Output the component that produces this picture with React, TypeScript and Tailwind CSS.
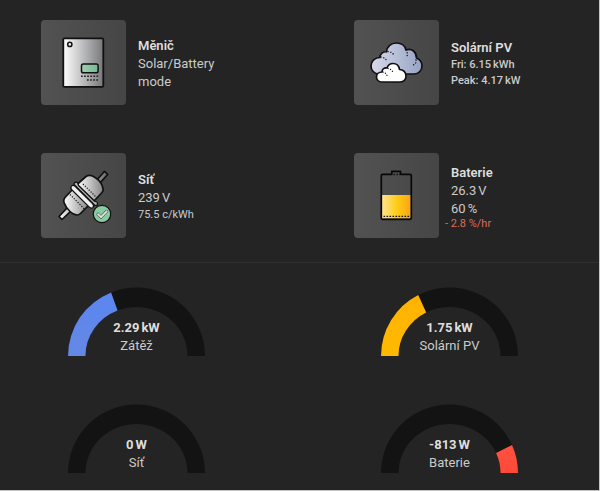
import React from "react";

interface ReadingProps {
  value: string;
  unit: string;
}

const Reading: React.FC<ReadingProps> = ({ value, unit }) => (
  <>
    {value}
    <span className="ml-0.5">{unit}</span>
  </>
);

const InverterIcon = () => (
  <svg viewBox="0 0 85 85" className="size-full" aria-hidden="true">
    <defs>
      <linearGradient id="inverter-body">
        <stop offset="0" stopColor="#ffffff" />
        <stop offset="1" stopColor="#77787b" />
      </linearGradient>
      <linearGradient id="inverter-screen">
        <stop offset="0" stopColor="#9fd0b0" />
        <stop offset="1" stopColor="#76b892" />
      </linearGradient>
    </defs>
    <rect x="22.3" y="18.3" width="40" height="48.6" rx="1.2" fill="url(#inverter-body)" stroke="#111" strokeWidth="1.8" />
    <circle cx="28.8" cy="24.4" r="2.1" fill="#eee" stroke="#111" strokeWidth="1.5" />
    <rect x="40.5" y="44" width="16.6" height="8.8" rx="1.8" fill="url(#inverter-screen)" stroke="#111" strokeWidth="1.5" />
    <path d="M40 56.3H58M46 60H58" stroke="#222" strokeWidth="1.4" strokeDasharray="1.7 1.4" />
  </svg>
);

const CloudsIcon = () => (
  <svg viewBox="0 0 85 85" className="size-full" aria-hidden="true">
    <defs>
      <linearGradient id="cloud-back">
        <stop offset="0" stopColor="#d8daea" />
        <stop offset="1" stopColor="#97a3c4" />
      </linearGradient>
    </defs>
    <g stroke="#111" strokeLinejoin="round" strokeLinecap="round">
      <path
        d="M25 54C20 54 17 50 17 46C17 41 21 37.500 26 37.500C26 34 29 31.500 32.500 31.800C33 26.500 37 23 42.500 23C47.500 23 51 26 52 30C58 28 62.500 32 62.500 38C66 39.500 68 42 68 46C68 50 65 54 60 54Z"
        fill="url(#cloud-back)"
        strokeWidth="1.7"
      />
      <g fill="none" strokeWidth="1.3" strokeDasharray="0.200 2.600">
        <path d="M34 31.500Q38 32 40 35M27 37Q31 37.500 33 41M52 30Q54 33 53 36M62 40Q62.500 44 59 45" />
      </g>
      <path
        d="M28 62C24.500 62 22.500 59.500 22.500 57C22.500 54 25 52 28 52C28 49 30.500 47.500 33 48C34 45 36 43.500 39 43.500C42.500 43.500 45 46 45.500 49.500C49.500 49.500 52 52.500 52 56C52 59.500 49.500 62 46 62Z"
        fill="#fff"
        strokeWidth="1.7"
      />
      <path
        d="M29 52Q31.500 52.500 33 55.500M34 48.500Q37 49 39 52"
        fill="none"
        strokeWidth="1.2"
        strokeDasharray="0.200 2.400"
      />
    </g>
  </svg>
);

const GridIcon = () => (
  <svg viewBox="0 0 85 85" className="size-full" aria-hidden="true">
    <defs>
      <linearGradient id="plug-metal">
        <stop offset="0" stopColor="#ffffff" />
        <stop offset="1" stopColor="#858585" />
      </linearGradient>
      <linearGradient id="plug-pin-low">
        <stop offset="0" stopColor="#ffffff" />
        <stop offset="1" stopColor="#bbbbbb" />
      </linearGradient>
      <linearGradient id="plug-pin-high">
        <stop offset="0" stopColor="#999999" />
        <stop offset="1" stopColor="#666666" />
      </linearGradient>
    </defs>
    <g stroke="#111" strokeWidth="1.700" strokeLinejoin="round">
      <path d="M27 54L18 63.500L21 66.500L30.500 57.500Z" fill="url(#plug-pin-low)" />
      <path d="M56 27L63.500 18.300L66.700 21.500L59 29.800Z" fill="url(#plug-pin-high)" />
      <path
        d="M32 36L24 44.500Q22 47 23 49.500Q24.500 54 29 58.500Q32 61.500 36 62Q38 62 39.500 60.500L48 52Z"
        fill="url(#plug-metal)"
      />
      <path
        d="M36 31.500L45 23.500Q48 21.500 51.500 23Q59 26.500 61.500 33.500Q63 37 61 39.500L53 48Z"
        fill="url(#plug-metal)"
      />
      <path
        d="M33.300 30Q35 28.300 36.700 30L37.500 32.500L53.500 48.200L56 49Q57.300 51 55.500 52.700Q54.500 53 53 51.500L34.500 33Q32.300 31.500 33.300 30Z"
        fill="#b5b5b5"
        strokeWidth="1.200"
      />
      <path
        d="M30.300 33.500Q31.500 31.500 33.800 33L51.500 50.700Q53.500 53 51.800 54.700Q49.800 55.800 47.800 53.600L31 37Q29 35.200 30.300 33.500Z"
        fill="#f0f0f0"
        strokeWidth="1.200"
      />
      <path d="M29 41.500L43.500 56M42 31L55.500 44.500" fill="none" strokeWidth="1.200" strokeDasharray="1.200 1.500" />
      <circle cx="61" cy="61" r="8.700" fill="#8bcba2" strokeWidth="1.200" />
    </g>
    <path d="M57 61.200L60 64.200L65.700 58.300" fill="none" stroke="#444" strokeWidth="3" strokeLinecap="round" />
    <path d="M57 61.200L60 64.200L65.700 58.300" fill="none" stroke="#d8eadf" strokeWidth="1.900" strokeLinecap="round" />
  </svg>
);

const BatteryIcon = () => (
  <svg viewBox="0 0 85 85" className="size-full" aria-hidden="true">
    <defs>
      <linearGradient id="battery-fill">
        <stop offset="0" stopColor="#ffe58f" />
        <stop offset="0.550" stopColor="#ffc910" />
        <stop offset="1" stopColor="#f9a31a" />
      </linearGradient>
    </defs>
    <path d="M28 42H57V65.500H28Z" fill="url(#battery-fill)" />
    <path
      d="M28.500 21.300H37.800V18.300H46.500V21.300H56Q57.300 21.300 57.300 22.500V65Q57.300 66.300 56 66.300H28.500Q27.300 66.300 27.300 65V22.500Q27.300 21.300 28.500 21.300Z"
      fill="none"
      stroke="#080808"
      strokeWidth="1.700"
      strokeLinejoin="round"
    />
    <path d="M39.500 21.500H46M29.500 63.300H56" stroke="#111" strokeWidth="1.300" strokeDasharray="1.600 1.400" />
  </svg>
);

interface DeviceCardProps {
  icon: React.ReactNode;
  title: string;
  children: React.ReactNode;
}

const DeviceCard: React.FC<DeviceCardProps> = ({ icon, title, children }) => (
  <article className="flex items-center gap-3 pl-[41px]">
    <div className="size-[85px] shrink-0 rounded bg-linear-to-r from-[#525252] to-[#464646]">{icon}</div>
    <div className="pt-[3px] text-[13px] leading-[18px]">
      <h2 className="font-semibold text-[#dedede]">{title}</h2>
      {children}
    </div>
  </article>
);

interface GaugeProps {
  label: string;
  value: string;
  unit: string;
  start?: number;
  end?: number;
  colors?: [string, string];
}

// Half ring segment between two fractions of the dial, 0 is left and 1 is right
const arcPath = (start: number, end: number) => {
  const point = (fraction: number, rx: number, ry: number) => {
    const angle = Math.PI * (1 - fraction);
    return `${68.5 + rx * Math.cos(angle)} ${69 - ry * Math.sin(angle)}`;
  };
  return [
    `M${point(start, 68.5, 68.5)}`,
    `A68.5 68.5 0 0 1 ${point(end, 68.5, 68.5)}`,
    `L${point(end, 51, 49)}`,
    `A51 49 0 0 0 ${point(start, 51, 49)}Z`,
  ].join("");
};

const Gauge: React.FC<GaugeProps> = ({ label, value, unit, start = 0, end = 0, colors }) => {
  const gradientId = React.useId();

  return (
    <figure className="grid justify-center">
      <svg viewBox="0 0 137 69" className="col-start-1 row-start-1 w-[137px]" aria-hidden="true">
        <path d={arcPath(0, 1)} fill="#131313" />
        {colors && (
          <>
            <linearGradient id={gradientId} x1="0" y1="0" x2="0" y2="1">
              <stop offset="0" stopColor={colors[0]} />
              <stop offset="1" stopColor={colors[1]} />
            </linearGradient>
            <path d={arcPath(start, end)} fill={`url(#${gradientId})`} />
          </>
        )}
      </svg>
      <figcaption className="col-start-1 row-start-1 self-end pb-px text-center text-[13px] leading-[18px]">
        <strong className="block font-bold text-[#dedede]">
          <Reading value={value} unit={unit} />
        </strong>
        {label}
      </figcaption>
    </figure>
  );
};

export default function App() {
  return (
    <main className="border-r border-b border-[#c4c4c4] bg-[#242424] font-['Roboto','Noto_Sans',sans-serif] text-[#cbcbcb]">
      <section className="grid grid-cols-2 gap-x-10 gap-y-12 pt-5 pr-[13px] pb-6">
        <DeviceCard icon={<InverterIcon />} title="Měnič">
          <p>
            Solar/Battery
            <br />
            mode
          </p>
        </DeviceCard>
        <DeviceCard icon={<CloudsIcon />} title="Solární PV">
          <p className="text-[11px] leading-4 font-medium">
            Fri: <Reading value="6.15" unit="kWh" />
          </p>
          <p className="text-[11px] leading-4 font-medium">
            Peak: <Reading value="4.17" unit="kW" />
          </p>
        </DeviceCard>
        <DeviceCard icon={<GridIcon />} title="Síť">
          <p>
            <Reading value="239" unit="V" />
          </p>
          <p className="text-[11px] leading-4">75.5 c/kWh</p>
        </DeviceCard>
        <DeviceCard icon={<BatteryIcon />} title="Baterie">
          <p>
            <Reading value="26.3" unit="V" />
          </p>
          <p>
            <Reading value="60" unit="%" />
          </p>
          <p className="-ml-1.5 text-[11px] leading-3 text-[#dd6d5c]">- 2.8 %/hr</p>
        </DeviceCard>
      </section>

      <section className="grid grid-cols-2 gap-x-10 gap-y-12 border-t border-[#303030] pt-6 pr-[13px] pb-[17px]">
        <Gauge label="Zátěž" value="2.29" unit="kW" end={0.379} colors={["#5b86f0", "#6488e4"]} />
        <Gauge label="Solární PV" value="1.75" unit="kW" end={0.349} colors={["#ffb300", "#ffb902"]} />
        <Gauge label="Síť" value="0" unit="W" />
        <Gauge label="Baterie" value="-813" unit="W" start={0.866} end={1} colors={["#ff5140", "#ff4a38"]} />
      </section>
    </main>
  );
}
